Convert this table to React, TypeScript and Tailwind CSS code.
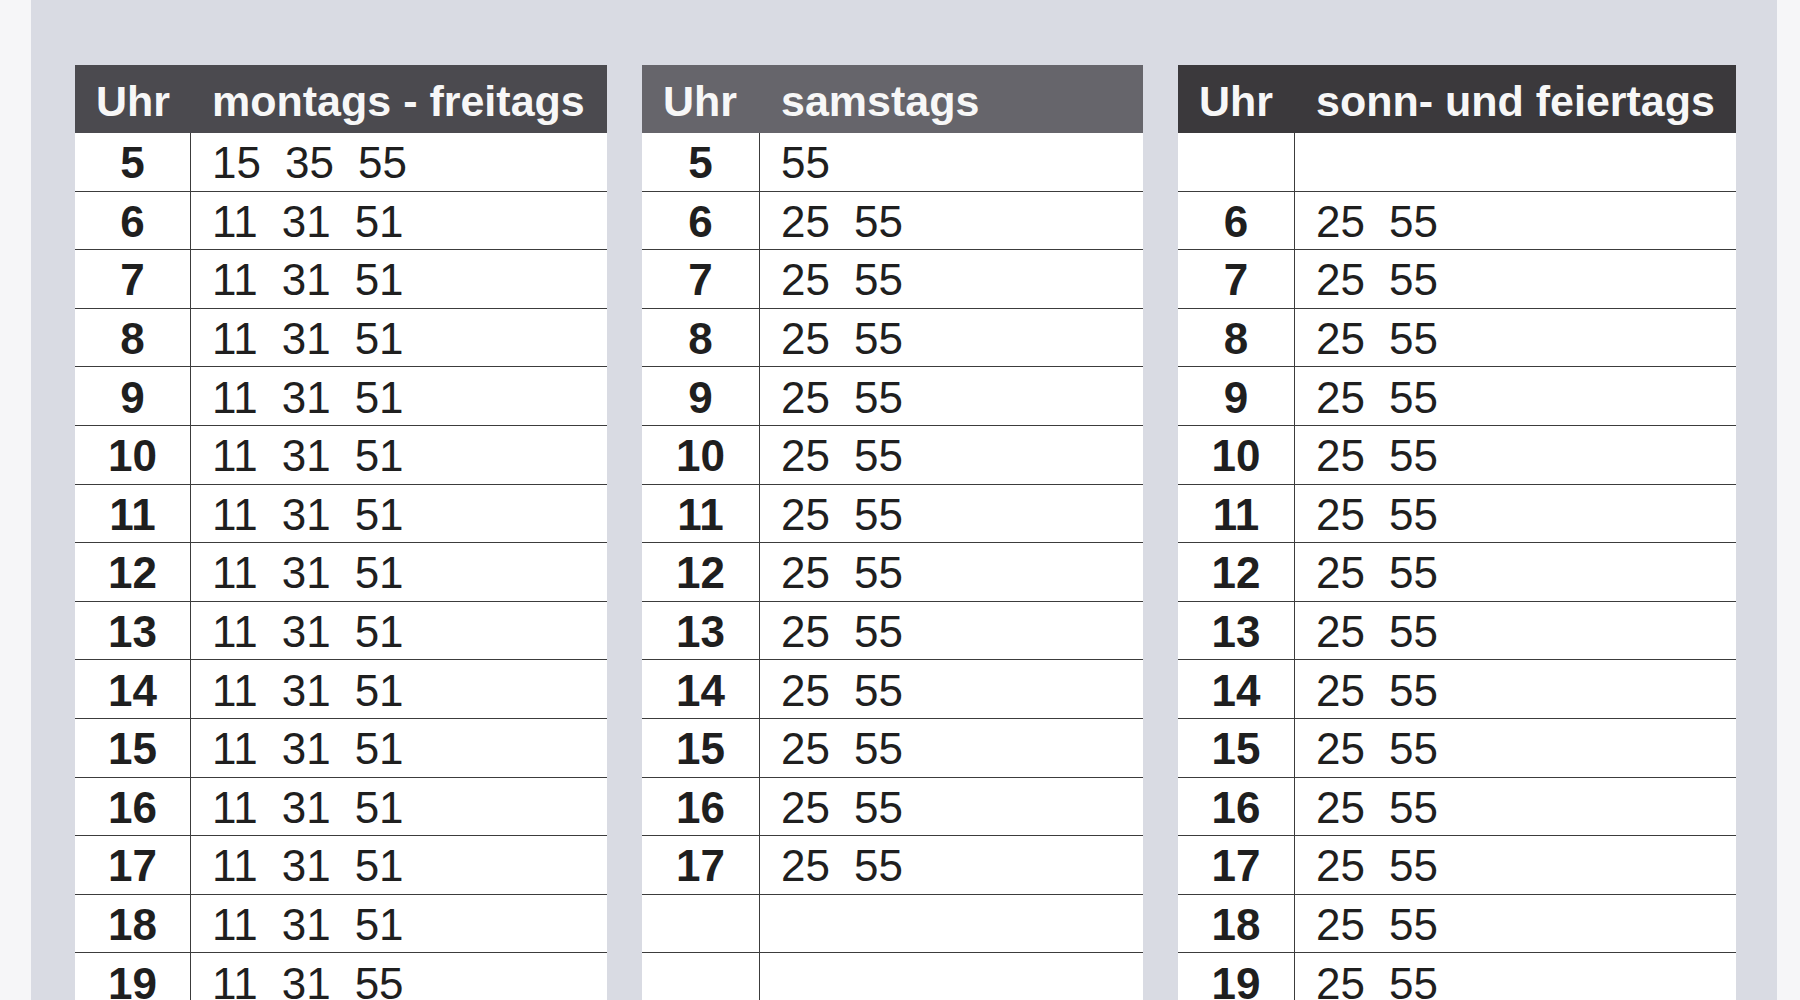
import * as React from 'react';

interface ITimetableProps {
    title: string
    headerBg: string
    width: string
    uhrWidth: string
    rows: Array<{ hour: string, minutes: string[] }>
}

const TRIPLE_WEEKDAY = ['11', '31', '51']
const SAT = ['25', '55']

// Werktags: 5 - 19 Uhr
const weekdayRows = [
    { hour: '5', minutes: ['15', '35', '55'] },
    ...[6, 7, 8, 9, 10, 11, 12, 13, 14, 15, 16, 17, 18].map((h) => ({ hour: String(h), minutes: TRIPLE_WEEKDAY })),
    { hour: '19', minutes: ['11', '31', '55'] },
]

// Samstags: 5 - 17 Uhr, danach leere Zeilen
const saturdayRows = [
    { hour: '5', minutes: ['55'] },
    ...[6, 7, 8, 9, 10, 11, 12, 13, 14, 15, 16, 17].map((h) => ({ hour: String(h), minutes: SAT })),
    { hour: '', minutes: [] },
    { hour: '', minutes: [] },
]

// Sonn- und Feiertags: erst ab 6 Uhr
const sundayRows = [
    { hour: '', minutes: [] },
    ...[6, 7, 8, 9, 10, 11, 12, 13, 14, 15, 16, 17, 18, 19].map((h) => ({ hour: String(h), minutes: SAT })),
]

function Timetable(props: ITimetableProps) {
    return (
        <div className={'flex flex-col shrink-0 ' + props.width}>

            {/* Kopfzeile */}
            <div className={'flex flex-row items-center h-[68px] pt-[4px] text-[43px] font-bold leading-none text-[#f7f7f7] ' + props.headerBg}>
                <div className={'shrink-0 pl-[21px] ' + props.uhrWidth}>Uhr</div>
                <div className="pl-[21px] whitespace-nowrap">{props.title}</div>
            </div>

            {/* Zeilen */}
            {props.rows.map((row, i) => (
                <div key={i} className="flex flex-row h-[58.6px] bg-white border-b-[1.5px] border-[#3c3c3c] text-[44px] leading-none text-[#1f1f1f]">
                    <div className={'shrink-0 flex items-center justify-center pt-[3px] font-bold border-r-[1.5px] border-[#3c3c3c] ' + props.uhrWidth}>
                        {row.hour}
                    </div>
                    <div className="flex flex-row items-center gap-[24px] pl-[21px] pt-[3px]">
                        {row.minutes.map((m, j) => (
                            <span key={j}>{m}</span>
                        ))}
                    </div>
                </div>
            ))}

        </div>
    )
}

export default function App() {
    return (
        <div className="h-screen w-full overflow-hidden bg-[#f6f6f8] font-['Liberation_Sans',Arial,sans-serif]">
            <div className="ml-[31px] mr-[23px] h-full bg-[#d9dbe3] pt-[65px] pl-[44px] flex flex-row gap-[35px] items-start">
                <Timetable
                    title="montags - freitags"
                    headerBg="bg-[#4b4a4f]"
                    width="w-[532px]"
                    uhrWidth="w-[116px]"
                    rows={weekdayRows}
                />
                <Timetable
                    title="samstags"
                    headerBg="bg-[#66656b]"
                    width="w-[501px]"
                    uhrWidth="w-[118px]"
                    rows={saturdayRows}
                />
                <Timetable
                    title="sonn- und feiertags"
                    headerBg="bg-[#3b393c]"
                    width="w-[558px]"
                    uhrWidth="w-[117px]"
                    rows={sundayRows}
                />
            </div>
        </div>
    )
}
